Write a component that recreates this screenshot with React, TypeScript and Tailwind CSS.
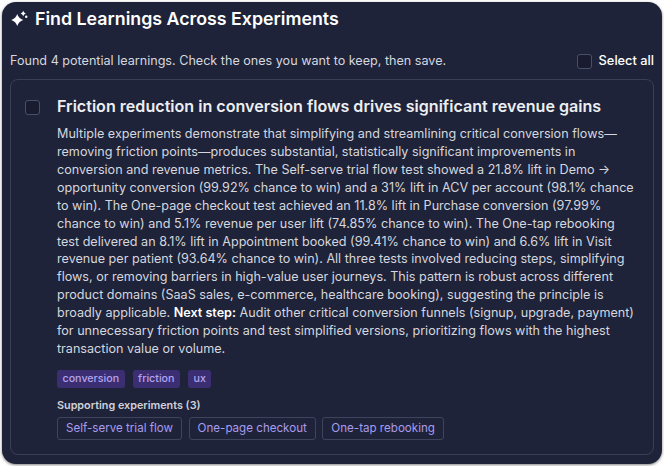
import { useState } from "react";

const tags = ["conversion", "friction", "ux"];
const experiments = ["Self-serve trial flow", "One-page checkout", "One-tap rebooking"];

function Sparkles() {
  return (
    <svg width="18" height="18" viewBox="0 0 24 24" fill="currentColor" className="shrink-0">
      <path d="M8.3 5.3Q10.2 11.4 16.3 13.3 10.2 15.2 8.3 21.3 6.4 15.2.3 13.3 6.4 11.4 8.3 5.3z" />
      <path d="M16.3 1Q17 3.9 19.8 4.6 17 5.3 16.3 8.2 15.6 5.3 12.8 4.6 15.6 3.9 16.3 1z" />
      <circle cx="20.3" cy="9" r="1.6" />
    </svg>
  );
}

function Checkbox({ checked, onChange }: { checked: boolean; onChange: () => void }) {
  return (
    <button
      type="button"
      onClick={onChange}
      className="w-[15px] h-[15px] rounded-[3px] border border-[#4a4f66] bg-[#191c31] shrink-0"
      aria-pressed={checked}
    />
  );
}

export default function App() {
  const [all, setAll] = useState(false);
  const [one, setOne] = useState(false);

  return (
    <div className="w-[664px] h-[466px] bg-white p-[2px] overflow-hidden font-['Inter',sans-serif]">
      <div className="h-[462px] rounded-[14px] bg-[#1e2339] text-[#e8e9ee] shadow-[0_1px_3px_rgba(0,0,0,0.5)] px-2 pt-[6px] flex flex-col">
        <div className="flex items-center gap-[6px] h-[22px] pl-[1px] text-white">
          <Sparkles />
          <h1 className="text-[17.8px] font-semibold leading-[22px]">Find Learnings Across Experiments</h1>
        </div>

        <div className="flex items-center justify-between mt-[19px] h-[24px] text-[12.6px]">
          <p className="text-[#d5d7df]">Found 4 potential learnings. Check the ones you want to keep, then save.</p>
          <label className="flex items-center gap-[7px] font-medium text-[12.8px] text-white">
            <Checkbox checked={all} onChange={() => setAll(!all)} />
            Select all
          </label>
        </div>

        <div className="mt-[6px] h-[376px] rounded-[8px] border border-[#3a3f57] flex pl-[14px] pr-[15px] pt-[15px]">
          <div className="w-[32px] shrink-0 pt-[1px]">
            <Checkbox checked={one} onChange={() => setOne(!one)} />
          </div>
          <div className="flex-1 min-w-0">
            <h2 className="text-[16.1px] font-semibold leading-[22px] text-[#eceef2]">
              Friction reduction in conversion flows drives significant revenue gains
            </h2>
            <p className="mt-[8px] text-[12.6px] leading-[17.92px] text-[#d5d7df]">
              Multiple experiments demonstrate that simplifying and streamlining critical conversion flows—removing friction points—produces substantial, statistically significant improvements in conversion and revenue metrics. The Self-serve trial flow test showed a 21.8% lift in Demo → opportunity conversion (99.92% chance to win) and a 31% lift in ACV per account (98.1% chance to win). The One-page checkout test achieved an 11.8% lift in Purchase conversion (97.99% chance to win) and 5.1% revenue per user lift (74.85% chance to win). The One-tap rebooking test delivered an 8.1% lift in Appointment booked (99.41% chance to win) and 6.6% lift in Visit revenue per patient (93.64% chance to win). All three tests involved reducing steps, simplifying flows, or removing barriers in high-value user journeys. This pattern is robust across different product domains (SaaS sales, e-commerce, healthcare booking), suggesting the principle is broadly applicable. <strong className="font-semibold text-white">Next step:</strong> Audit other critical conversion funnels (signup, upgrade, payment) for unnecessary friction points and test simplified versions, prioritizing flows with the highest transaction value or volume.
            </p>
            <div className="flex gap-[8px] mt-[12px]">
              {tags.map((t) => (
                <span key={t} className="h-[18px] px-[5.5px] rounded-[3px] bg-[#3c2e72] text-[#b3a4f0] text-[10.7px] leading-[18px] font-medium">
                  {t}
                </span>
              ))}
            </div>
            <div className="mt-[11px] text-[10.8px] leading-[14px] font-semibold text-[#cfd1d9]">Supporting experiments (3)</div>
            <div className="flex gap-[6.5px] mt-[4.5px]">
              {experiments.map((e) => (
                <span key={e} className="h-[23px] px-[8px] rounded-[3px] border border-[#3f445c] text-[#a99bee] text-[11.6px] leading-[21px]">
                  {e}
                </span>
              ))}
            </div>
          </div>
        </div>
      </div>
    </div>
  );
}
